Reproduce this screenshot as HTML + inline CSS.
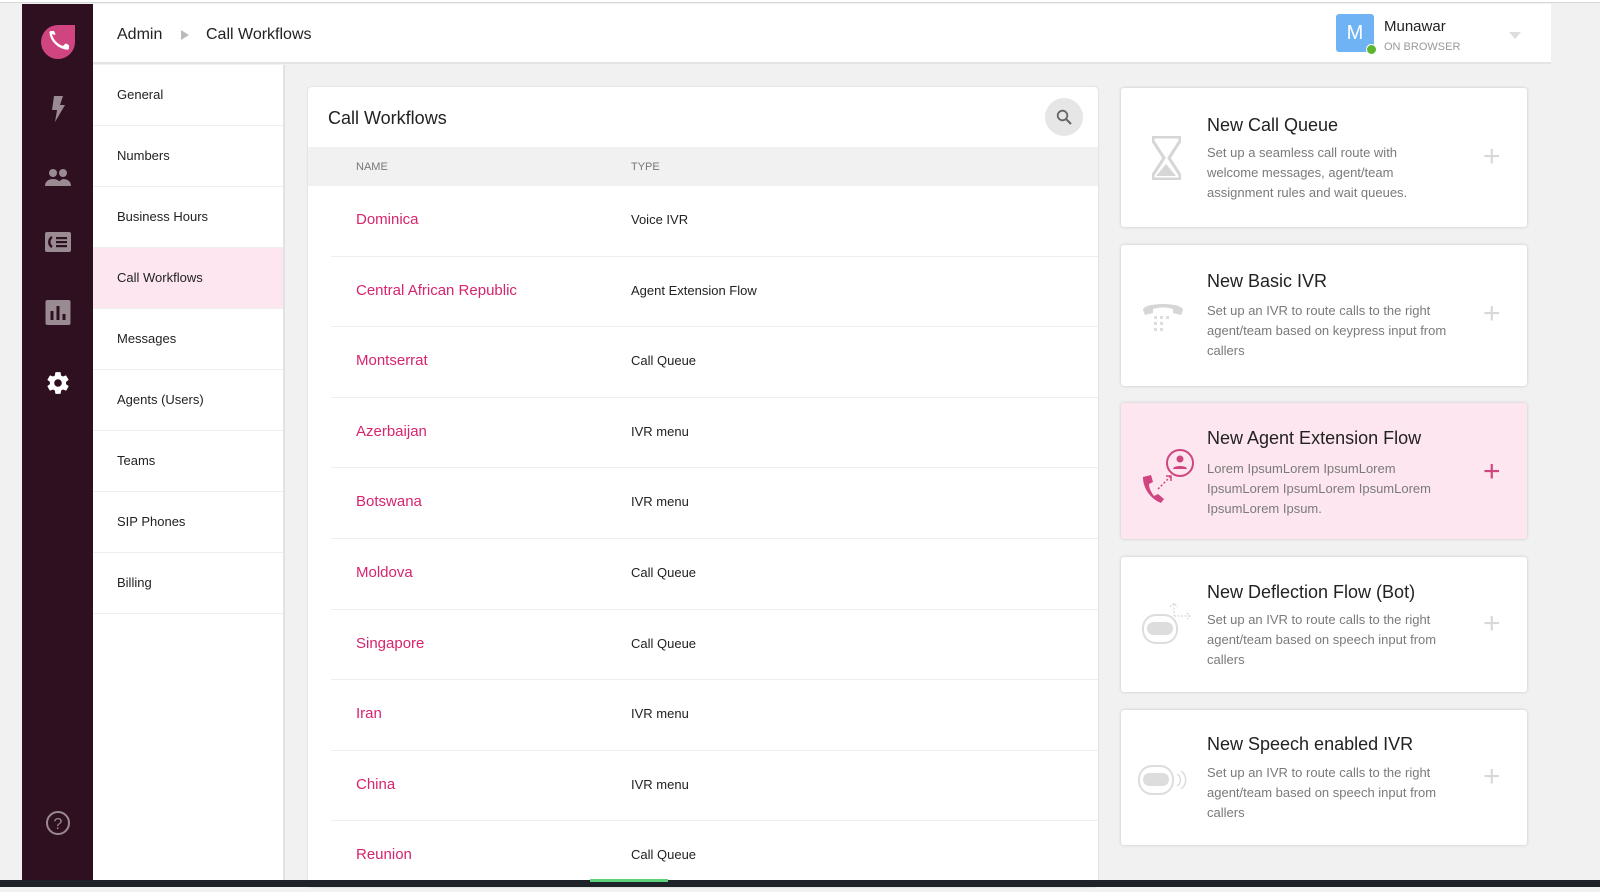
<!DOCTYPE html>
<html><head><meta charset="utf-8"><style>
*{margin:0;padding:0;box-sizing:border-box}
body{width:1600px;height:887px;overflow:hidden;background:#f1f1f1;font-family:"Liberation Sans",sans-serif;position:relative;color:#222}
.topline{position:absolute;left:0;top:0;width:1600px;height:3px;background:#fff;border-bottom:1px solid #d8d8d8}
.side{position:absolute;left:22px;top:4px;width:71px;height:876px;background:#2e1020}
.side svg{position:absolute;left:50%;transform:translateX(-50%)}
.header{position:absolute;left:93px;top:4px;width:1458px;height:60px;background:#fff;border-bottom:2px solid #e4e4e4}
.crumb{position:absolute;top:22px;font-size:16px;color:#222}
.nav{position:absolute;left:93px;top:65px;width:192px;height:815px;background:#fff;border-right:2px solid #e2e2e2}
.nav div{height:61px;border-bottom:1px solid #eee;font-size:13px;padding:22px 0 0 24px;color:#222}
.nav .act{background:#fde6ef}
.card{position:absolute;left:308px;top:87px;width:790px;height:800px;background:#fff;border-radius:4px;box-shadow:0 0 2px rgba(0,0,0,.15)}
.thead{position:absolute;left:0;top:60px;width:100%;height:39px;background:#f1f1f1;font-size:11px;color:#777}
.row{position:absolute;left:23px;width:767px;height:70.6px;border-bottom:1px solid #eee}
.row .n{position:absolute;left:25px;top:25px;font-size:15px;color:#d6246e}
.row .t{position:absolute;left:300px;top:26px;font-size:13px;color:#222}
.rc{position:absolute;left:1121px;width:406px;background:#fff;border-radius:3px;box-shadow:0 0 3px rgba(0,0,0,.18)}
.rc h3{position:absolute;left:86px;font-weight:normal;font-size:18px;color:#222}
.rc p{position:absolute;left:86px;width:250px;font-size:13px;line-height:20px;color:#7a7a7a}
.rc .plus{position:absolute;left:362px;font-size:30px;color:#d8d8d8;font-weight:300}
.rc svg{position:absolute}
.bottom{position:absolute;left:0;top:880px;width:1600px;height:7px;background:#1e2329}
</style></head><body>
<div class="topline"></div>
<div class="side">
<svg style="top:19px" width="38" height="38" viewBox="0 0 38 38"><path d="M19 2 H36 V19 A17 17 0 1 1 19 2Z" fill="#d0457f"/><path d="M13 11c1 5 5 10 11 12l2-2c.5-.5 1-.5 1.5-.2l2.5 1.5v3c0 .8-.6 1.5-1.5 1.4C19 26 11 18 10.5 9.5 10.5 8.6 11.2 8 12 8h3l1.3 2.6c.2.5.1 1-.3 1.4z" fill="#fff"/></svg>
<svg style="top:92px" width="16" height="26" viewBox="0 0 16 26"><path d="M4 0h9l-3 9h5L5 26l2-12H2z" fill="#9a8a91"/></svg>
<svg style="top:164px" width="26" height="18" viewBox="0 0 26 18"><circle cx="8" cy="5" r="4" fill="#9a8a91"/><circle cx="18" cy="5" r="4" fill="#9a8a91"/><path d="M0 18c0-5 4-7 8-7s8 2 8 7zM13 18c0-4 2-6 5-7 4 0 8 2 8 7z" fill="#9a8a91"/></svg>
<svg style="top:228px" width="26" height="20" viewBox="0 0 26 20"><rect width="26" height="20" rx="2" fill="#9a8a91"/><path d="M7 5a6 6 0 0 0 0 10" stroke="#2e1020" stroke-width="2.5" fill="none"/><rect x="11" y="5" width="11" height="2.2" fill="#2e1020"/><rect x="11" y="9" width="11" height="2.2" fill="#2e1020"/><rect x="11" y="13" width="11" height="2.2" fill="#2e1020"/></svg>
<svg style="top:296px" width="25" height="25" viewBox="0 0 25 25"><rect width="25" height="25" rx="2" fill="#9a8a91"/><rect x="5" y="11" width="3" height="9" fill="#2e1020"/><rect x="11" y="6" width="3" height="14" fill="#2e1020"/><rect x="17" y="14" width="3" height="6" fill="#2e1020"/></svg>
<svg style="top:366px" width="26" height="26" viewBox="0 0 24 24"><path fill="#fff" d="M19.4 13c.04-.3.06-.66.06-1s-.02-.7-.07-1l2.1-1.650c.2-.15.24-.42.12-.64l-2-3.46c-.12-.22-.39-.3-.61-.22l-2.490 1c-.52-.4-1.080-.73-1.690-.98l-.38-2.650A.49.49 0 0 0 14 2h-4c-.25 0-.46.18-.49.42l-.38 2.65c-.61.25-1.17.59-1.69.98l-2.49-1c-.23-.09-.49 0-.61.22l-2 3.46c-.13.22-.07.49.12.64L4.57 11c-.05.32-.07.66-.07 1s.02.68.07 1l-2.11 1.65c-.19.15-.24.42-.12.64l2 3.46c.12.22.39.3.61.22l2.49-1c.52.4 1.08.73 1.69.98l.38 2.65c.03.24.24.42.49.42h4c.25 0 .46-.18.49-.42l.38-2.65c.61-.25 1.17-.59 1.69-.98l2.49 1c.23.09.49 0 .61-.22l2-3.46c.12-.22.07-.49-.12-.64zM12 15.5A3.5 3.5 0 1 1 12 8.5a3.5 3.5 0 0 1 0 7z"/></svg>
<svg style="top:806px" width="26" height="26" viewBox="0 0 26 26"><circle cx="13" cy="13" r="11" stroke="#9a8a91" stroke-width="2" fill="none"/><text x="13" y="19" font-size="16" text-anchor="middle" fill="#9a8a91" font-family="Liberation Sans">?</text></svg>
</div>
<div class="header">
<span class="crumb" style="left:24px">Admin</span>
<svg style="position:absolute;left:88px;top:26px" width="8" height="10"><path d="M0 0L8 5L0 10z" fill="#bbb"/></svg>
<span class="crumb" style="left:113px">Call Workflows</span>
<div style="position:absolute;left:1243px;top:10px;width:38px;height:38px;background:#6fb3f5;border-radius:3px;color:#fff;font-size:20px;text-align:center;line-height:38px">M</div>
<div style="position:absolute;left:1273px;top:40px;width:11px;height:11px;background:#5db531;border-radius:50%;border:1.5px solid #fff"></div>
<div style="position:absolute;left:1291px;top:14px;font-size:15px;color:#222">Munawar</div>
<div style="position:absolute;left:1291px;top:37px;font-size:11px;color:#999">ON BROWSER</div>
<svg style="position:absolute;left:1416px;top:28px" width="12" height="7"><path d="M0 0h12L6 7z" fill="#ddd"/></svg>
</div>
<div class="nav">
<div>General</div><div>Numbers</div><div>Business Hours</div><div class="act">Call Workflows</div><div>Messages</div><div>Agents (Users)</div><div>Teams</div><div>SIP Phones</div><div>Billing</div>
</div>
<div class="card">
<div style="position:absolute;left:20px;top:21px;font-size:18px;color:#222">Call Workflows</div>
<div style="position:absolute;left:737px;top:11px;width:38px;height:38px;border-radius:50%;background:#e6e6e6"><svg style="position:absolute;left:11px;top:11px" width="16" height="16" viewBox="0 0 16 16"><circle cx="6.5" cy="6.5" r="4.8" stroke="#666" stroke-width="1.8" fill="none"/><path d="M10 10l5 5" stroke="#666" stroke-width="2"/></svg></div>
<div class="thead"><span style="position:absolute;left:48px;top:14px">NAME</span><span style="position:absolute;left:323px;top:14px">TYPE</span></div>
<div class="row" style="top:99px"><span class="n">Dominica</span><span class="t">Voice IVR</span></div>
<div class="row" style="top:169.6px"><span class="n">Central African Republic</span><span class="t">Agent Extension Flow</span></div>
<div class="row" style="top:240.2px"><span class="n">Montserrat</span><span class="t">Call Queue</span></div>
<div class="row" style="top:310.8px"><span class="n">Azerbaijan</span><span class="t">IVR menu</span></div>
<div class="row" style="top:381.4px"><span class="n">Botswana</span><span class="t">IVR menu</span></div>
<div class="row" style="top:452px"><span class="n">Moldova</span><span class="t">Call Queue</span></div>
<div class="row" style="top:522.6px"><span class="n">Singapore</span><span class="t">Call Queue</span></div>
<div class="row" style="top:593.2px"><span class="n">Iran</span><span class="t">IVR menu</span></div>
<div class="row" style="top:663.8px"><span class="n">China</span><span class="t">IVR menu</span></div>
<div class="row" style="top:734.4px;border:none"><span class="n">Reunion</span><span class="t">Call Queue</span></div>
</div>

<div class="rc" style="top:88px;height:139px">
<svg style="left:31px;top:48px" width="29" height="44" viewBox="0 0 29 44"><path d="M1 1h27v4L17 22l11 17v4H1v-4l11-17L1 5z" fill="none" stroke="#d6d6d6" stroke-width="3"/><path d="M4 40l10-12 10 12z" fill="#d6d6d6"/></svg>
<h3 style="top:27px">New Call Queue</h3>
<p style="top:55px;width:215px">Set up a seamless call route with welcome messages, agent/team assignment rules and wait queues.</p>
<span class="plus" style="top:52px">+</span>
</div>
<div class="rc" style="top:245px;height:141px">
<svg style="left:20px;top:51px" width="44" height="40" viewBox="0 0 44 40"><path d="M2 14c0-8 40-8 40 0l-2 5-8-2v-4c-6-2-14-2-20 0v4l-8 2z" fill="#d6d6d6"/><g fill="#ddd"><rect x="13" y="20" width="3" height="3"/><rect x="19" y="20" width="3" height="3"/><rect x="25" y="20" width="3" height="3"/><rect x="13" y="26" width="3" height="3"/><rect x="19" y="26" width="3" height="3"/><rect x="13" y="32" width="3" height="3"/><rect x="19" y="32" width="3" height="3"/></g></svg>
<h3 style="top:26px">New Basic IVR</h3>
<p style="top:56px">Set up an IVR to route calls to the right agent/team based on keypress input from callers</p>
<span class="plus" style="top:52px">+</span>
</div>
<div class="rc" style="top:403px;height:136px;background:#fde6ef">
<svg style="left:20px;top:46px" width="54" height="56" viewBox="0 0 54 56"><circle cx="39" cy="14" r="13" fill="none" stroke="#d0457f" stroke-width="2"/><circle cx="39" cy="10" r="3.5" fill="#d0457f"/><path d="M32 20c0-4 14-4 14 0z" fill="#d0457f"/><path d="M2 28c0 12 8 22 18 26l3-4-6-5-4 2c-3-4-5-8-5-12l4-2-2-7z" fill="#d0457f"/><path d="M17 40l12-12" stroke="#d0457f" stroke-width="1.5" stroke-dasharray="2 2"/><path d="M25 27h5v5" stroke="#d0457f" stroke-width="1.5" fill="none"/></svg>
<h3 style="top:25px">New Agent Extension Flow</h3>
<p style="top:56px;width:260px">Lorem IpsumLorem IpsumLorem IpsumLorem IpsumLorem IpsumLorem IpsumLorem Ipsum.</p>
<span class="plus" style="top:52px;color:#d0457f">+</span>
</div>
<div class="rc" style="top:557px;height:135px">
<svg style="left:20px;top:44px" width="52" height="44" viewBox="0 0 52 44"><rect x="2" y="14" width="34" height="28" rx="13" fill="none" stroke="#ddd" stroke-width="2"/><rect x="6" y="21" width="26" height="13" rx="6.5" fill="#ddd"/><path d="M33 3v12M29 6l4-4 4 4M33 15h16M46 12l3 3-3 3" stroke="#ddd" stroke-width="1.5" fill="none" stroke-dasharray="2 1.5"/></svg>
<h3 style="top:25px">New Deflection Flow (Bot)</h3>
<p style="top:53px;width:250px">Set up an IVR to route calls to the right agent/team based on speech input from callers</p>
<span class="plus" style="top:50px">+</span>
</div>
<div class="rc" style="top:710px;height:135px">
<svg style="left:16px;top:54px" width="52" height="32" viewBox="0 0 52 32"><rect x="2" y="2" width="34" height="28" rx="13" fill="none" stroke="#ddd" stroke-width="2"/><rect x="6" y="9" width="26" height="13" rx="6.5" fill="#ddd"/><path d="M40 10a7 7 0 0 1 0 12M44 7a11 11 0 0 1 0 18" stroke="#ddd" stroke-width="1.5" fill="none"/></svg>
<h3 style="top:24px">New Speech enabled IVR</h3>
<p style="top:53px;width:250px">Set up an IVR to route calls to the right agent/team based on speech input from callers</p>
<span class="plus" style="top:50px">+</span>
</div>
<div class="bottom"></div>
<div style="position:absolute;left:590px;top:879px;width:78px;height:3px;background:#5fd07a"></div>
</body></html>
